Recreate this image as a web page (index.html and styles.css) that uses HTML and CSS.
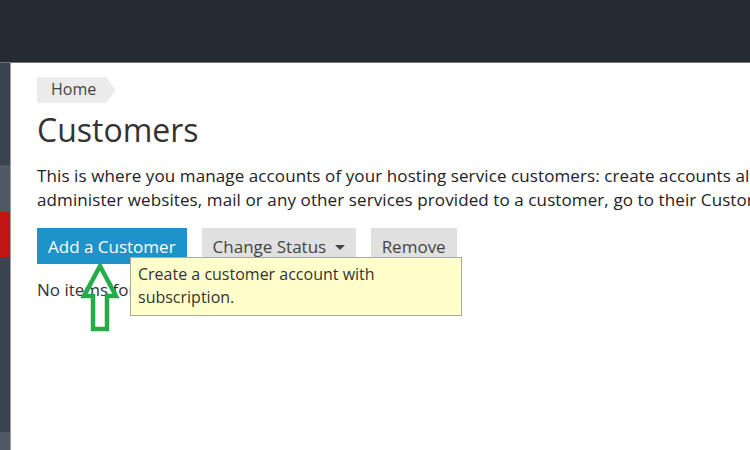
FILE: index.html
```html
<!DOCTYPE html>
<html lang="en">
<head>
    <meta charset="UTF-8">
    <meta name="viewport" content="width=device-width, initial-scale=1.0">
    <title>Customers</title>
    <link rel="stylesheet" href="styles.css">
</head>
<body>
    <div class="top-bar"></div>
    <div class="page">
        <div class="side-strip">
            <span class="seg seg-dark-1"></span>
            <span class="seg seg-gray"></span>
            <span class="seg seg-red"></span>
            <span class="seg seg-dark-2"></span>
            <span class="seg seg-gray-2"></span>
        </div>
        <div class="content">
            <div class="breadcrumb"><span class="crumb">Home</span></div>
            <h1 class="page-title">Customers</h1>
            <p class="intro">This is where you manage accounts of your hosting service customers: create accounts along with subscriptions, suspend or activate them. To<br>administer websites, mail or any other services provided to a customer, go to their Customer Panel.</p>

            <div class="toolbar">
                <button type="button" class="btn btn-primary">Add a Customer</button>
                <button type="button" class="btn">Change Status <span class="caret"></span></button>
                <button type="button" class="btn">Remove</button>

                <div class="tooltip">Create a customer account with<br>subscription.</div>
            </div>

            <p class="empty">No items found.</p>

            <!-- annotation arrow -->
            <svg class="hint-arrow" width="40" height="70" viewBox="0 0 40 70">
                <path d="M20 3 L36 33 L27 33 L27 66 L13 66 L13 33 L4 33 Z" fill="none" stroke="#22ad48" stroke-width="4.5" stroke-linejoin="miter"/>
            </svg>
        </div>
    </div>
</body>
</html>
```

FILE: styles.css
```css
body {
    margin: 0;
    font-family: "Open Sans", "DejaVu Sans", sans-serif;
    color: #333;
    background: #fff;
    overflow: hidden;
}

.top-bar {
    height: 62px;
    background-color: #242b34;
    border-bottom: 1px solid #70767c;
}

.page {
    display: flex;
    height: 387px;
}

.side-strip {
    width: 10px;
    display: flex;
    flex-direction: column;
    border-right: 1px solid #9aa1a7;
    flex-shrink: 0;
}

.seg {
    display: block;
}

.seg-dark-1 {
    height: 102px;
    background-color: #3a4450;
}

.seg-gray {
    height: 47px;
    background-color: #505961;
}

.seg-red {
    height: 45px;
    background-color: #c11414;
}

.seg-dark-2 {
    height: 175px;
    background-color: #3a4450;
}

.seg-gray-2 {
    flex: 1;
    background-color: #505961;
}

.content {
    position: relative;
    flex: 1;
    padding: 14px 0 0 26px;
    white-space: nowrap;
    overflow: hidden;
}

.breadcrumb {
    display: flex;
}

.crumb {
    position: relative;
    display: inline-block;
    height: 26px;
    line-height: 25px;
    padding: 0 10px 0 14px;
    background-color: #ebebeb;
    font-size: 16px;
    color: #444;
}

.crumb::after {
    content: "";
    position: absolute;
    top: 0;
    right: -10px;
    border-top: 13px solid transparent;
    border-bottom: 13px solid transparent;
    border-left: 10px solid #ebebeb;
}

.page-title {
    margin: 7px 0 0;
    font-size: 32px;
    font-weight: 400;
    line-height: 40px;
    color: #333;
}

.intro {
    margin: 14px 0 0;
    font-size: 17px;
    line-height: 24px;
    letter-spacing: 0.1px;
    color: #222;
}

.toolbar {
    position: relative;
    display: flex;
    gap: 15px;
    margin-top: 16px;
}

.btn {
    height: 36px;
    padding: 0 11px;
    border: none;
    background-color: #e0e0e0;
    color: #444;
    font-family: "Open Sans", "DejaVu Sans", sans-serif;
    font-size: 17px;
    cursor: pointer;
}

.btn-primary {
    background-color: #1e93c9;
    color: #fff;
}

.caret {
    display: inline-block;
    margin-left: 4px;
    vertical-align: middle;
    border-top: 5px solid #444;
    border-left: 5px solid transparent;
    border-right: 5px solid transparent;
}

.tooltip {
    position: absolute;
    left: 93px;
    top: 29px;
    width: 316px;
    height: 47px;
    padding: 5px 7px;
    background-color: #ffffcc;
    border: 1px solid #a9a9a0;
    font-size: 16px;
    line-height: 23px;
    color: #333;
}

.empty {
    margin: 14px 0 0;
    font-size: 17px;
    line-height: 24px;
    color: #333;
}

.hint-arrow {
    position: absolute;
    left: 69px;
    top: 200px;
}
```
